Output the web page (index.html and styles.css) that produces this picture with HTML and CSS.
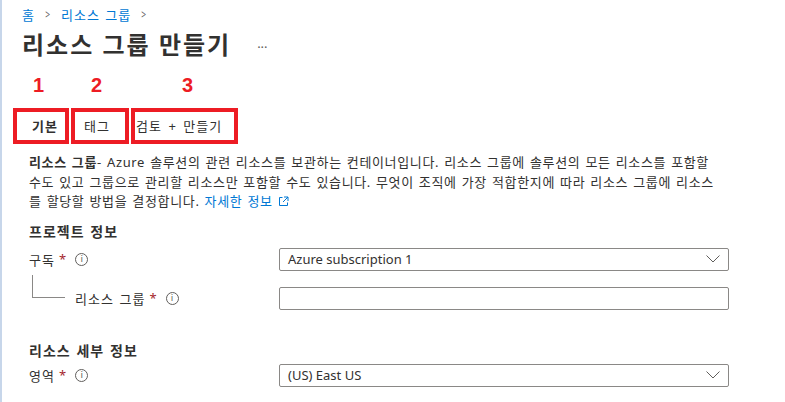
FILE: index.html
```html
<!DOCTYPE html>
<html lang="ko">
<head>
    <meta charset="UTF-8">
    <meta name="viewport" content="width=device-width, initial-scale=1.0">
    <title>리소스 그룹 만들기</title>
    <link rel="stylesheet" href="styles.css">
</head>
<body>
    <div class="page">
        <nav class="breadcrumb">
            <a href="#" class="crumb">홈</a>
            <span class="crumb-sep">&gt;</span>
            <a href="#" class="crumb">리소스 그룹</a>
            <span class="crumb-sep">&gt;</span>
        </nav>

        <div class="title-row">
            <h1 class="title">리소스 그룹 만들기</h1>
            <span class="more">···</span>
        </div>

        <div class="tabs">
            <div class="tab-col">
                <span class="step step-1">1</span>
                <a href="#" class="tab tab-1 is-active">기본</a>
            </div>
            <div class="tab-col">
                <span class="step step-2">2</span>
                <a href="#" class="tab tab-2">태그</a>
            </div>
            <div class="tab-col">
                <span class="step step-3">3</span>
                <a href="#" class="tab tab-3">검토 + 만들기</a>
            </div>
        </div>

        <section class="form">
            <p class="intro">
                <b>리소스 그룹</b>- Azure 솔루션의 관련 리소스를 보관하는 컨테이너입니다. 리소스 그룹에 솔루션의 모든 리소스를 포함할<br>
                수도 있고 그룹으로 관리할 리소스만 포함할 수도 있습니다. 무엇이 조직에 가장 적합한지에 따라 리소스 그룹에 리소스<br>
                를 할당할 방법을 결정합니다. <a href="#" class="link">자세한 정보 <svg class="ext" width="11" height="11" viewBox="0 0 11 11"><path d="M4.5 1.5H1.5V9.5H9.5V6.5" fill="none" stroke="#0078d4"/><path d="M6 1H10V5M10 1L5 6" fill="none" stroke="#0078d4"/></svg></a>
            </p>

            <h2 class="group-title">프로젝트 정보</h2>

            <div class="field">
                <div class="label">구독 <span class="req">*</span> <span class="info">i</span></div>
                <div class="control">
                    <div class="select">
                        <span>Azure subscription 1</span>
                        <svg width="14" height="8" viewBox="0 0 14 8"><path d="M0.5 0.5L7 7L13.5 0.5" fill="none" stroke="#605e5c"/></svg>
                    </div>
                </div>
            </div>

            <div class="field field-sub">
                <div class="label label-sub">
                    <span class="tree"></span>
                    리소스 그룹 <span class="req">*</span> <span class="info">i</span>
                </div>
                <div class="control">
                    <input class="input" type="text">
                </div>
            </div>

            <h2 class="group-title group-title-2">리소스 세부 정보</h2>

            <div class="field">
                <div class="label">영역 <span class="req">*</span> <span class="info">i</span></div>
                <div class="control">
                    <div class="select">
                        <span>(US) East US</span>
                        <svg width="14" height="8" viewBox="0 0 14 8"><path d="M0.5 0.5L7 7L13.5 0.5" fill="none" stroke="#605e5c"/></svg>
                    </div>
                </div>
            </div>
        </section>
    </div>
</body>
</html>
```

FILE: styles.css
```css
* {
    margin: 0;
    padding: 0;
    box-sizing: border-box;
}
body {
    font-family: "Segoe UI", "Noto Sans", "Noto Sans CJK KR", sans-serif;
    font-size: 13px;
    color: #323130;
    background-color: #ffffff;
    letter-spacing: 0.08em;
    word-spacing: 1px;
}
.page {
    border-left: 2px solid #c7d6ea;
    min-height: 402px;
    padding-left: 20px;
}

.breadcrumb {
    display: flex;
    align-items: center;
    gap: 9px;
    height: 26px;
    padding-top: 2px;
}
.crumb {
    color: #0078d4;
    text-decoration: none;
}
.crumb-sep {
    color: #605e5c;
    font-size: 12px;
    transform: scaleX(0.7);
}

.title-row {
    display: flex;
    align-items: center;
    height: 38px;
}
.title {
    font-size: 24px;
    font-weight: 600;
    line-height: 38px;
    letter-spacing: 2px;
    word-spacing: 0;
    color: #323130;
}
.more {
    margin-left: 26px;
    color: #605e5c;
    font-size: 13px;
    letter-spacing: 0;
    padding-top: 4px;
}

.tabs {
    display: flex;
    gap: 2px;
    margin-left: -9px;
}
.tab-col {
    display: flex;
    flex-direction: column;
}
.step {
    color: #ed1c24;
    font-family: "Liberation Sans", Arial, sans-serif;
    font-weight: bold;
    font-size: 20px;
    letter-spacing: 0;
    line-height: 22px;
    height: 22px;
    margin-top: 10px;
    margin-bottom: 12px;
}
.step-1 { padding-left: 20px; }
.step-2 { padding-left: 20px; }
.step-3 { padding-left: 51px; }

.tab {
    display: block;
    height: 36px;
    border: 4px solid #ed1c24;
    color: #323130;
    text-decoration: none;
    line-height: 28px;
    font-size: 13px;
}
.tab.is-active { font-weight: 600; }
.tab-1 { width: 56px; padding-left: 15px; }
.tab-2 { width: 58px; padding-left: 9px; }
.tab-3 { width: 107px; padding-left: 1px; word-spacing: 2px; }

.form {
    padding-left: 7px;
    padding-top: 9px;
}
.intro {
    line-height: 19.5px;
    white-space: nowrap;
    letter-spacing: 0.05em;
    word-spacing: 1px;
}
.intro b { font-weight: 600; }
.link {
    color: #0078d4;
    text-decoration: none;
}
.ext { vertical-align: -1px; }

.group-title {
    font-size: 14px;
    font-weight: 600;
    line-height: 20px;
    margin-top: 10px;
    margin-bottom: 6px;
}
.group-title-2 {
    margin-top: 31px;
    margin-bottom: 3px;
}

.field {
    display: flex;
    align-items: center;
    height: 23px;
    margin-bottom: 16px;
}
.label {
    width: 250px;
    display: flex;
    align-items: center;
    gap: 3px;
}
.label-sub {
    padding-left: 46px;
    position: relative;
}
.tree {
    position: absolute;
    left: 3px;
    top: -14px;
    width: 33px;
    height: 23px;
    border-left: 1px solid #8a8886;
    border-bottom: 1px solid #8a8886;
}
.req {
    color: #a4262c;
    margin-left: 1px;
}
.info {
    display: inline-flex;
    align-items: center;
    justify-content: center;
    width: 13px;
    height: 13px;
    margin-left: 5px;
    border: 1px solid #605e5c;
    border-radius: 50%;
    color: #605e5c;
    font-size: 9px;
    letter-spacing: 0;
    line-height: 1;
    font-family: "DejaVu Sans", sans-serif;
}
.control {
    width: 450px;
}
.select,
.input {
    width: 100%;
    height: 23px;
    border: 1px solid #8a8886;
    border-radius: 2px;
    background: #ffffff;
}
.select {
    display: flex;
    align-items: center;
    justify-content: space-between;
    padding: 0 8px 0 8px;
    letter-spacing: 0;
    word-spacing: 0;
}
.input { display: block; }
```
